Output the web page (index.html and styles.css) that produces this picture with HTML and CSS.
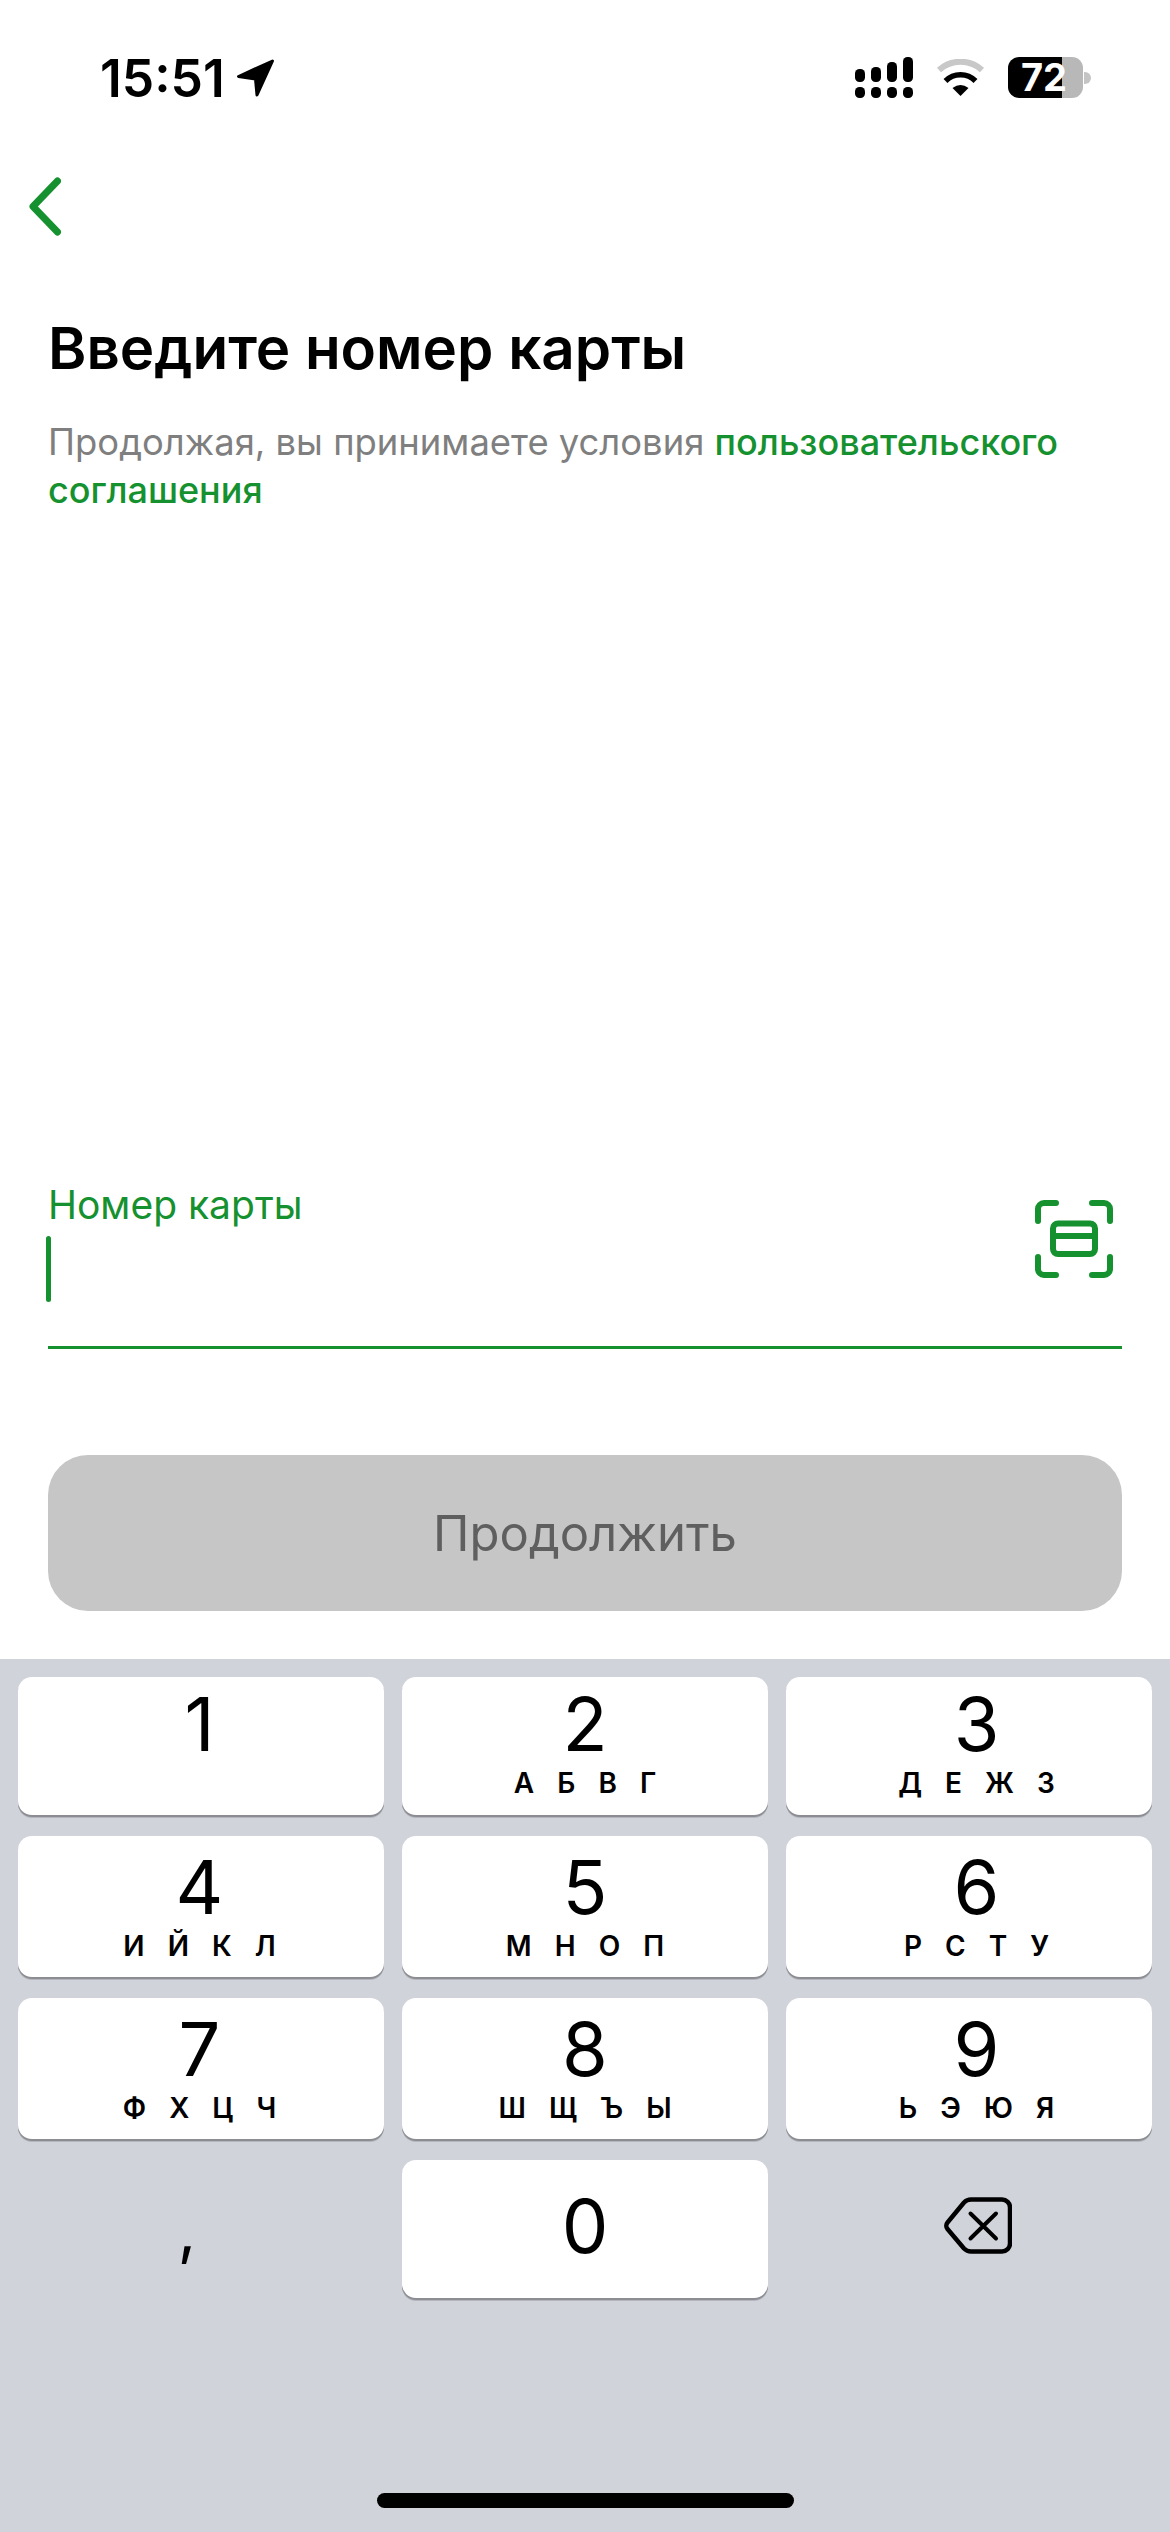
FILE: index.html
```html
<!DOCTYPE html>
<html lang="ru">
<head>
    <meta charset="UTF-8">
    <meta name="viewport" content="width=device-width, initial-scale=1.0">
    <title>Номер карты</title>

    <link rel="stylesheet" href="styles.css">
</head>
<body>
    <div class="screen">
        <div class="status-bar">
            <div class="status-left">
                <span class="time">15:51</span>
                <svg class="arrow-icon" width="39" height="38" viewBox="0 0 39 38">
                    <path d="M36.5 2 L2.5 17.5 L19.5 20 L21 36 Z" fill="#000" stroke="#000" stroke-width="3" stroke-linejoin="round"/>
                </svg>
            </div>
            <div class="status-right">
                <svg class="signal-icon" width="58" height="41" viewBox="0 0 58 41">
                    <rect x="0" y="12" width="10" height="13" rx="4.5"/>
                    <rect x="16" y="10" width="10" height="15" rx="4.5"/>
                    <rect x="32" y="5" width="10" height="20" rx="4.5"/>
                    <rect x="48" y="0" width="10" height="25" rx="4.5"/>
                    <rect x="0" y="30" width="10" height="11" rx="4.5"/>
                    <rect x="16" y="30" width="10" height="11" rx="4.5"/>
                    <rect x="32" y="30" width="10" height="11" rx="4.5"/>
                    <rect x="48" y="30" width="10" height="11" rx="4.5"/>
                </svg>
                <svg class="wifi-icon" width="49" height="37" viewBox="0 0 49 37">
                    <path d="M3 11 A32 32 0 0 1 46 11" fill="none" stroke="#c8c8c8" stroke-width="6"/>
                    <path d="M9.5 22 A21 21 0 0 1 39.5 22" fill="none" stroke="#000" stroke-width="5.5"/>
                    <path d="M24.5 37 L16.5 29 Q24.5 23 32.5 29 Z" fill="#000"/>
                </svg>
                <div class="battery">
                    <div class="battery-body">72</div>
                    <div class="battery-cap"></div>
                </div>
            </div>
        </div>

        <a class="back" href="#">
            <svg width="36" height="60" viewBox="0 0 36 60">
                <path d="M32.5 4 L8 29.5 L32.5 55" fill="none" stroke="#15912f" stroke-width="7" stroke-linecap="round" stroke-linejoin="round"/>
            </svg>
        </a>

        <div class="content">
            <h1 class="title">Введите номер карты</h1>
            <p class="terms">Продолжая, вы принимаете условия <a href="#">пользовательского соглашения</a></p>

            <div class="field">
                <div class="field-input">
                    <label class="field-label">Номер карты</label>
                    <div class="caret"></div>
                </div>
                <svg class="scan-icon" width="78" height="78" viewBox="0 0 78 78" fill="none" stroke="#15912f" stroke-width="6" stroke-linecap="round">
                    <path d="M3 21 V9 A6 6 0 0 1 9 3 H21"/>
                    <path d="M57 3 H69 A6 6 0 0 1 75 9 V21"/>
                    <path d="M3 57 V69 A6 6 0 0 0 9 75 H21"/>
                    <path d="M57 75 H69 A6 6 0 0 0 75 69 V57"/>
                    <rect x="18" y="23.5" width="42" height="30.5" rx="5"/>
                    <path d="M18 36 H60" stroke-linecap="butt"/>
                </svg>
            </div>

            <button class="continue" type="button">Продолжить</button>
        </div>

        <div class="keyboard">
            <div class="keys">
                <div class="key key-first key-left"><span class="digit">1</span></div>
                <div class="key key-first"><span class="digit">2</span><span class="letters">А Б В Г</span></div>
                <div class="key key-first key-right"><span class="digit">3</span><span class="letters">Д Е Ж З</span></div>
                <div class="key key-left"><span class="digit">4</span><span class="letters">И Й К Л</span></div>
                <div class="key"><span class="digit">5</span><span class="letters">М Н О П</span></div>
                <div class="key key-right"><span class="digit">6</span><span class="letters">Р С Т У</span></div>
                <div class="key key-left"><span class="digit">7</span><span class="letters">Ф Х Ц Ч</span></div>
                <div class="key"><span class="digit">8</span><span class="letters">Ш Щ Ъ Ы</span></div>
                <div class="key key-right"><span class="digit">9</span><span class="letters">Ь Э Ю Я</span></div>
                <div class="key-plain key-comma">,</div>
                <div class="key key-zero"><span class="digit">0</span></div>
                <div class="key-plain key-delete">
                    <svg width="68" height="57" viewBox="0 0 68 57" fill="none" stroke="#000" stroke-width="4.5" stroke-linecap="round" stroke-linejoin="round">
                        <path d="M27 2.5 H58 A8 8 0 0 1 66 10.5 V46.5 A8 8 0 0 1 58 54.5 H27 A10 10 0 0 1 20 51.5 L3.5 32 A5 5 0 0 1 3.5 25.5 L20 5.5 A10 10 0 0 1 27 2.5 Z"/>
                        <path d="M26.5 16.5 L52 41.5 M52 16.5 L26.5 41.5" stroke-width="4"/>
                    </svg>
                </div>
            </div>
            <div class="home-indicator"></div>
        </div>
    </div>
</body>
</html>
```

FILE: styles.css
```css
*{
    box-sizing: border-box;
}

body{
    margin: 0;
    background-color: white;
    font-family: "Inter", "Noto Sans", sans-serif;
}

.screen{
    width: 1170px;
    height: 2532px;
    display: flex;
    flex-direction: column;
    overflow: hidden;
}

/* status bar */
.status-bar{
    height: 120px;
    padding: 57px 79px 0 100px;
    display: flex;
    justify-content: space-between;
    align-items: flex-start;
}

.status-left{
    display: flex;
    align-items: center;
    gap: 11px;
}

.time{
    font-size: 51.5px;
    font-weight: 600;
    line-height: 42px;
}

.status-right{
    display: flex;
    align-items: flex-start;
}

.wifi-icon{
    margin-left: 23px;
    margin-top: 2px;
}

.battery{
    display: flex;
    align-items: center;
    margin-left: 23px;
}

.battery-body{
    width: 75px;
    height: 41px;
    border-radius: 11px;
    padding-left: 13px;
    background: linear-gradient(to right, black 54px, #b8b8b8 54px);
    color: white;
    font-size: 38px;
    font-weight: 700;
    line-height: 41px;
}

.battery-cap{
    width: 7px;
    height: 12px;
    margin-left: 1px;
    border-radius: 0 6px 6px 0;
    background-color: #c4c4c4;
}

/* page */
.back{
    display: block;
    margin: 57px 0 0 25px;
    height: 60px;
}

.content{
    flex: 1;
    display: flex;
    flex-direction: column;
    padding: 0 48px 48px;
}

.title{
    margin: 76px 0 0;
    font-size: 58.3px;
    font-weight: 600;
    line-height: 70px;
    color: black;
}

.terms{
    margin: 35px 0 0;
    font-size: 36.4px;
    line-height: 48px;
    color: #7f7f7f;
}

.terms a{
    color: #15912f;
    font-size: 36px;
    font-weight: 500;
    text-decoration: none;
}

.field{
    margin-top: auto;
    display: flex;
    justify-content: space-between;
    border-bottom: 3px solid #15912f;
    height: 172px;
}

.field-label{
    display: block;
    padding-top: 6px;
    font-size: 39px;
    line-height: 44px;
    color: #15912f;
}

.caret{
    width: 5px;
    height: 66px;
    margin: 9px 0 0 -2px;
    border-radius: 3px;
    background-color: #15912f;
}

.scan-icon{
    margin: 23px 9px 0 0;
}

.continue{
    display: block;
    width: 100%;
    height: 156px;
    margin-top: 106px;
    border: none;
    border-radius: 40px;
    background-color: #c6c6c6;
    color: #5f5f5f;
    font-family: inherit;
    font-size: 49px;
    font-weight: 400;
}

/* keyboard */
.keyboard{
    height: 873px;
    padding: 18px 18px 0;
    background-color: #d0d3da;
}

.keys{
    display: grid;
    grid-template-columns: repeat(3, 366px);
    grid-template-rows: 138px 141px 141px 138px;
    gap: 21px 18px;
}

.key{
    display: flex;
    flex-direction: column;
    align-items: center;
    padding-top: 14px;
    background-color: white;
    border-radius: 14px;
    box-shadow: 0 2px 0 #8b8d92, 0 3px 0 rgba(139, 141, 146, 0.4);
}

.key-first{
    padding-top: 10px;
}

.key-zero{
    padding-top: 29px;
}

.key-left{
    padding-right: 3px;
}

.key-right{
    padding-left: 15px;
}

.digit{
    font-size: 74px;
    line-height: 74px;
    color: black;
}

.letters{
    margin-top: 5px;
    font-size: 28px;
    font-weight: 600;
    line-height: 34px;
    word-spacing: 16px;
    color: black;
}

.key-plain{
    display: flex;
    align-items: center;
    justify-content: center;
}

.key-delete{
    padding: 0 0 8px 18px;
}

.key-comma{
    padding-right: 28px;
    font-size: 64px;
}

.home-indicator{
    width: 417px;
    height: 15px;
    margin: 195px auto 0;
    border-radius: 8px;
    background-color: black;
}
```
